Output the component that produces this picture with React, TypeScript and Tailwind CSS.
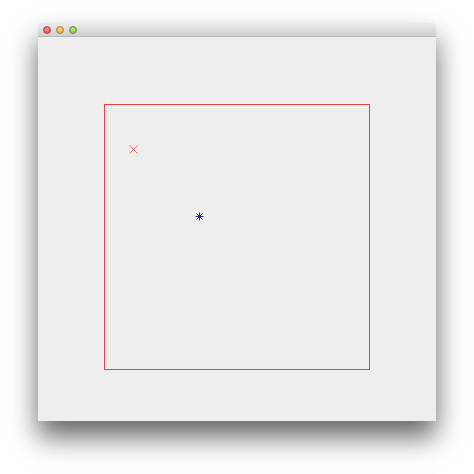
export default function App() {
  return (
    <div className="w-[474px] h-[474px] bg-white pt-[23px] pl-[38px]">
      <div className="w-[398px] h-[398px] flex flex-col shadow-[0_16px_26px_rgba(0,0,0,0.6)]">
        {/* title bar */}
        <div className="h-[14px] flex items-center gap-[5px] pl-[5px] bg-gradient-to-b from-[#ececec] to-[#d0d0d0] border-b border-[#b8b8b8] rounded-t-[3px]">
          <div className="w-[8px] h-[8px] rounded-full bg-[radial-gradient(circle_at_50%_35%,#f19a9a,#d23b3b)] border border-[#a84a4a]" />
          <div className="w-[8px] h-[8px] rounded-full bg-[radial-gradient(circle_at_50%_35%,#f7d98a,#d9a02a)] border border-[#a8843a]" />
          <div className="w-[8px] h-[8px] rounded-full bg-[radial-gradient(circle_at_50%_35%,#bfe28d,#7ab83a)] border border-[#6c8f3d]" />
        </div>
        {/* canvas */}
        <div className="flex-1 bg-[#eeeeee] pl-[66px] pt-[67px]">
          <div className="relative w-[266px] h-[266px] border border-[#e8434a]">
            <svg className="absolute left-[24px] top-[40px]" width="9" height="9" viewBox="0 0 9 9">
              <path d="M0.5 0.5 L8.5 8.5 M8.5 0.5 L0.5 8.5" stroke="#e8565d" strokeWidth="0.85" fill="none" />
            </svg>
            <svg className="absolute left-[90px] top-[107px]" width="9" height="9" viewBox="0 0 9 9">
              <path d="M4.5 0.5 L4.5 8.5 M0.5 4.5 L8.5 4.5 M1.5 1.5 L7.5 7.5 M7.5 1.5 L1.5 7.5" stroke="#24339a" strokeWidth="1" fill="none" />
            </svg>
          </div>
        </div>
      </div>
    </div>
  );
}
